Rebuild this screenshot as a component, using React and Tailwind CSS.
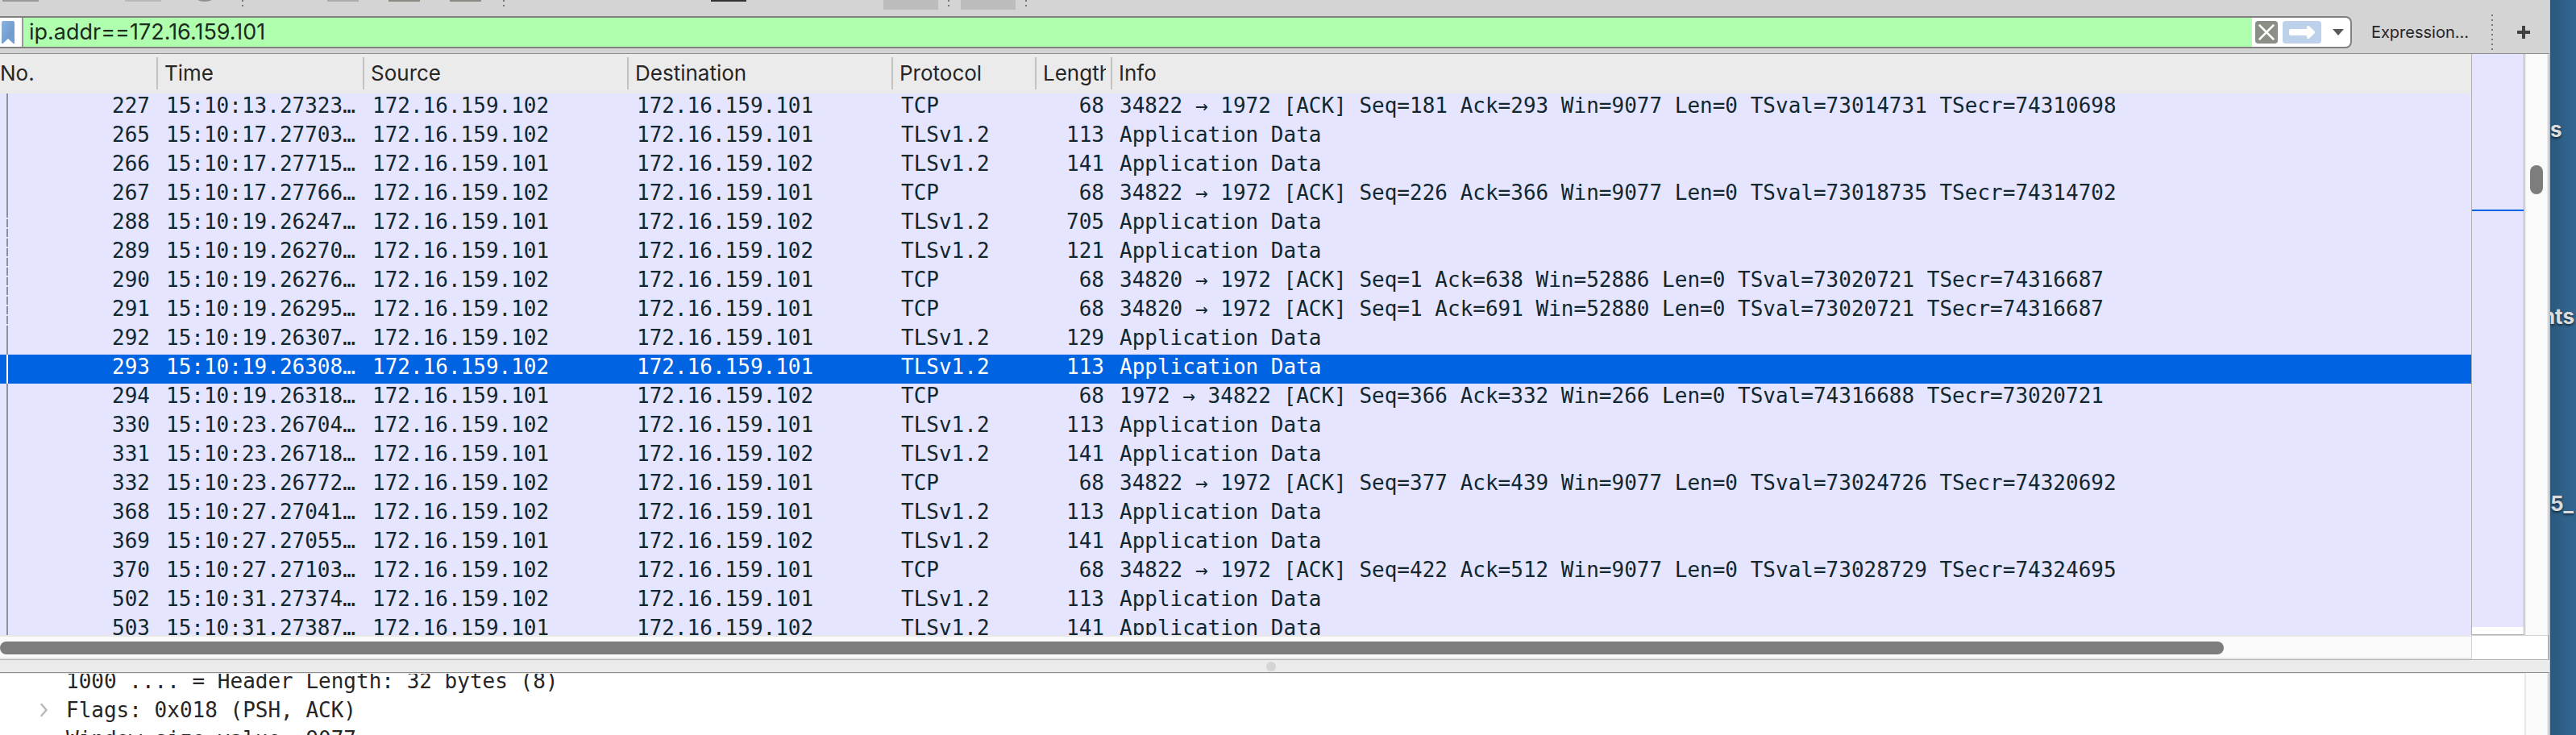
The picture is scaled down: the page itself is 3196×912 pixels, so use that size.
import React from "react";

const A = "172.16.159.101";
const B = "172.16.159.102";
const APP = "Application Data";

const packets = [
  [227, "15:10:13.27323…", B, A, "TCP", 68, "34822 → 1972 [ACK] Seq=181 Ack=293 Win=9077 Len=0 TSval=73014731 TSecr=74310698"],
  [265, "15:10:17.27703…", B, A, "TLSv1.2", 113, APP],
  [266, "15:10:17.27715…", A, B, "TLSv1.2", 141, APP],
  [267, "15:10:17.27766…", B, A, "TCP", 68, "34822 → 1972 [ACK] Seq=226 Ack=366 Win=9077 Len=0 TSval=73018735 TSecr=74314702"],
  [288, "15:10:19.26247…", A, B, "TLSv1.2", 705, APP],
  [289, "15:10:19.26270…", A, B, "TLSv1.2", 121, APP],
  [290, "15:10:19.26276…", B, A, "TCP", 68, "34820 → 1972 [ACK] Seq=1 Ack=638 Win=52886 Len=0 TSval=73020721 TSecr=74316687"],
  [291, "15:10:19.26295…", B, A, "TCP", 68, "34820 → 1972 [ACK] Seq=1 Ack=691 Win=52880 Len=0 TSval=73020721 TSecr=74316687"],
  [292, "15:10:19.26307…", B, A, "TLSv1.2", 129, APP],
  [293, "15:10:19.26308…", B, A, "TLSv1.2", 113, APP],
  [294, "15:10:19.26318…", A, B, "TCP", 68, "1972 → 34822 [ACK] Seq=366 Ack=332 Win=266 Len=0 TSval=74316688 TSecr=73020721"],
  [330, "15:10:23.26704…", B, A, "TLSv1.2", 113, APP],
  [331, "15:10:23.26718…", A, B, "TLSv1.2", 141, APP],
  [332, "15:10:23.26772…", B, A, "TCP", 68, "34822 → 1972 [ACK] Seq=377 Ack=439 Win=9077 Len=0 TSval=73024726 TSecr=74320692"],
  [368, "15:10:27.27041…", B, A, "TLSv1.2", 113, APP],
  [369, "15:10:27.27055…", A, B, "TLSv1.2", 141, APP],
  [370, "15:10:27.27103…", B, A, "TCP", 68, "34822 → 1972 [ACK] Seq=422 Ack=512 Win=9077 Len=0 TSval=73028729 TSecr=74324695"],
  [502, "15:10:31.27374…", B, A, "TLSv1.2", 113, APP],
  [503, "15:10:31.27387…", A, B, "TLSv1.2", 141, APP],
];

const SELECTED = 293;
const OTHER_STREAM = [288, 289, 290, 291];

function ToolbarEdge() {
  return (
    <svg className="block h-3 w-full" aria-hidden="true">
      <rect x="3" y="0" width="45" height="2" fill="#9a9a9a" />
      <rect x="155" y="0" width="45" height="2" fill="#b9b9b9" />
      <path d="M245 0h18q-4 2-9 2t-9-2z" fill="#8f8f8f" />
      <rect x="406" y="0" width="39" height="2" fill="#adadad" />
      <rect x="482" y="0" width="39" height="2" fill="#8b8b84" />
      <rect x="558" y="0" width="39" height="2" fill="#8b8b84" />
      <rect x="882" y="0" width="44" height="2" fill="#2f3335" />
      <rect x="1096" y="0" width="68" height="12" fill="#bcbcbc" />
      <rect x="1192" y="0" width="68" height="12" fill="#bcbcbc" />
      {[300, 624, 1176, 1272].map((x) => (
        <g key={x} fill="#777">
          <rect x={x} y="0" width="2" height="2" />
          <rect x={x} y="6" width="2" height="2" />
        </g>
      ))}
    </svg>
  );
}

function FilterBar() {
  return (
    <form className="flex h-[54px] items-start pt-2" onSubmit={(e) => e.preventDefault()}>
      <div className="flex h-10 flex-1 items-center rounded-r-lg border-y-2 border-r-2 border-[#808080] bg-white">
        <button type="button" aria-label="Bookmarks" className="flex h-9 w-[27px] shrink-0 items-center pl-0.5">
          <svg width="16" height="28" viewBox="0 0 16 28">
            <defs>
              <linearGradient id="bm" x1="0" y1="0" x2="1" y2="1">
                <stop offset="0" stopColor="#8db2de" />
                <stop offset="0.6" stopColor="#719dd0" />
              </linearGradient>
            </defs>
            <path d="M0 2q0-2 2-2h12q2 0 2 2v26h-1.500l-6.500-6-6.500 6H0z" fill="url(#bm)" />
          </svg>
        </button>
        <input
          type="text"
          aria-label="Display filter"
          defaultValue="ip.addr==172.16.159.101"
          className="h-9 min-w-0 flex-1 border-l-2 border-[#999] bg-[#afffaf] pl-[7px] text-[27px] leading-9 text-[#1c2b1c] outline-none"
        />
        <button type="button" aria-label="Clear filter" className="ml-1 h-7 w-7">
          <svg width="28" height="28" viewBox="0 0 28 28">
            <rect width="28" height="28" rx="4" fill="#8b8d87" />
            <path d="M5.500 5.500l17 17M22.500 5.500l-17 17" stroke="#fff" strokeWidth="2.500" strokeLinecap="round" />
          </svg>
        </button>
        <button type="submit" aria-label="Apply filter" className="ml-1.5 h-7 w-12">
          <svg width="48" height="28" viewBox="0 0 48 28">
            <rect width="48" height="28" rx="4" fill="#bdd2ea" />
            <path d="M10 10h20V8q0-3 3-1.500l6.500 6q1 1.500 0 3l-6.500 6q-3 1.500-3-1.500v-2H10q-2 0-2-2v-4q0-2 2-2z" fill="#fff" />
          </svg>
        </button>
        <button type="button" aria-label="Recent filters" className="flex h-7 w-9 items-center justify-center pl-1.5">
          <svg width="14" height="8" viewBox="0 0 14 8">
            <path d="M0 0h14L7 8z" fill="#5a5a57" />
          </svg>
        </button>
      </div>
      <button type="button" className="ml-6 h-10 text-[20px] leading-10 text-[#262626]">
        Expression…
      </button>
      <svg className="-mt-0.5 ml-7" width="2" height="44" viewBox="0 0 2 44" aria-hidden="true">
        <path d="M1 0v44" stroke="#777" strokeWidth="2" strokeDasharray="2 4" />
      </svg>
      <button type="button" aria-label="Add filter button" className="ml-[30px] mr-6 flex h-10 items-center">
        <svg width="16" height="16" viewBox="0 0 16 16">
          <path d="M6 0h4v6h6v4h-6v6H6v-6H0V6h6z" fill="#414141" />
        </svg>
      </button>
    </form>
  );
}

function StreamLine({ no }) {
  if (no === SELECTED) return <span className="ml-2 block h-9 w-0.5 bg-white" />;
  if (OTHER_STREAM.includes(no))
    return (
      <span className="ml-2 flex h-9 w-0.5 flex-col gap-0.5">
        <span className="h-2.5 bg-[#8c929b]" />
        <span className="h-2.5 bg-[#8c929b]" />
        <span className="h-2.5 bg-[#8c929b]" />
      </span>
    );
  return <span className="ml-2 block h-9 w-0.5 bg-[#8c929b]" />;
}

function Th({ children, last, first }) {
  return (
    <th scope="col" className="h-[49px] p-0 text-left align-top font-normal">
      <div className={"mt-1 flex h-10 items-center " + (last ? "" : "border-r-2 border-[#c2c2c2]")}>
        <span className={"mr-1.5 overflow-hidden whitespace-nowrap leading-10 " + (first ? "" : "ml-2")}>{children}</span>
      </div>
    </th>
  );
}

function PacketTable() {
  return (
    <table className="w-full table-fixed border-collapse">
      <colgroup>
        <col className="w-[196px]" />
        <col className="w-[256px]" />
        <col className="w-[328px]" />
        <col className="w-[328px]" />
        <col className="w-[178px]" />
        <col className="w-[94px]" />
        <col />
      </colgroup>
      <thead className="bg-[#ebebeb] text-[26px] text-[#262626]">
        <tr>
          <Th first>No.</Th>
          <Th>Time</Th>
          <Th>Source</Th>
          <Th>Destination</Th>
          <Th>Protocol</Th>
          <Th>Length</Th>
          <Th last>Info</Th>
        </tr>
      </thead>
      <tbody className="font-['DejaVu_Sans_Mono',monospace] text-[26px] leading-[30px] text-[#12272e]">
        {packets.map(([no, time, src, dst, proto, len, info]) => (
          <tr key={no} className={no === SELECTED ? "h-9 bg-[#0063e1] text-white" : "h-9"}>
            <td className="p-0 align-top">
              <div className="flex h-9 justify-between pr-2.5">
                <StreamLine no={no} />
                <span>{no}</span>
              </div>
            </td>
            <td className="whitespace-nowrap p-0 pl-2.5 align-top">{time}</td>
            <td className="p-0 pl-2.5 align-top">{src}</td>
            <td className="p-0 pl-2.5 align-top">{dst}</td>
            <td className="p-0 pl-2.5 align-top">{proto}</td>
            <td className="p-0 pr-2.5 text-right align-top">{len}</td>
            <td className="whitespace-nowrap p-0 pl-[9px] align-top">{info}</td>
          </tr>
        ))}
      </tbody>
    </table>
  );
}

export default function App() {
  return (
    <div className="flex h-screen overflow-hidden bg-[#2f628c] font-['Inter',sans-serif]">
      <main className="flex min-w-0 flex-1 flex-col border-r border-[#c9c9c9] bg-[#d4d4d4]">
        <ToolbarEdge />
        <FilterBar />

        <section className="flex min-h-0 flex-1 border-r border-t border-r-[#b0b0b0] border-t-[#8e8e8e] bg-[#ebebeb]">
          <div className="min-w-0 flex-1 overflow-hidden bg-[#e5e5ff]">
            <PacketTable />
          </div>
          <div className="flex w-[66px] flex-col border-x border-b border-[#b0b0b0] bg-[#e5e5ff]">
            <div className="h-[193px]" />
            <div className="h-0.5 bg-[#0063e1]" />
            <div className="flex-1" />
            <div className="h-[9px] bg-white" />
          </div>
          <div className="flex w-[30px] justify-center border-x-2 border-[#e8e8e8] bg-[#fafafa] pt-[138px]">
            <div className="h-9 w-4 rounded-full bg-[#7d7d7d]" />
          </div>
        </section>

        <div className="flex h-[31px] border-b border-r-2 border-[#b3b3b3]">
          <div className="flex-1 border-y-2 border-[#e8e8e8] bg-[#fafafa] pt-1.5">
            <div className="h-4 w-9/10 rounded-full bg-[#7d7d7d]" />
          </div>
          <div className="w-[95px] border-l border-t border-[#d4d4d4] bg-white" />
        </div>

        <div className="flex h-[15px] items-center justify-center bg-[#ebebeb] pr-2.5">
          <div className="h-3 w-3 rounded-full bg-[#d4d4d4]" />
        </div>

        <section className="flex h-[78px] border-r border-t border-r-[#b0b0b0] border-t-[#8e8e8e] bg-white">
          <div className="min-w-0 flex-1 overflow-hidden border-t border-[#ebebeb] pl-[82px] font-['DejaVu_Sans_Mono',monospace] text-[26px] leading-9 text-[#262626]">
            <div className="-mt-[9px]">1000 .... = Header Length: 32 bytes (8)</div>
            <div className="-ml-8 flex items-center">
              <svg className="w-8 shrink-0" height="18" viewBox="0 0 32 18" aria-hidden="true">
                <path d="M1.500 2l6 7-6 7" fill="none" stroke="#b9b9b9" strokeWidth="2.500" strokeLinecap="round" />
              </svg>
              Flags: 0x018 (PSH, ACK)
            </div>
            <div>Window size value: 9077</div>
          </div>
          <div className="w-[30px] border-x-2 border-[#e8e8e8] bg-[#fafafa]" />
        </section>
      </main>

      <aside className="flex w-8 flex-col items-end gap-[200px] overflow-hidden bg-linear-to-r from-[#2b587c] to-[#31658f] to-80% pt-[145px] text-[26px] font-bold leading-8 text-[#dcdcdc] [text-shadow:0_2px_3px_#0008]">
        <span className="w-8">s</span>
        <span className="pr-0.5">nts</span>
        <span className="w-8">5_</span>
      </aside>
    </div>
  );
}
